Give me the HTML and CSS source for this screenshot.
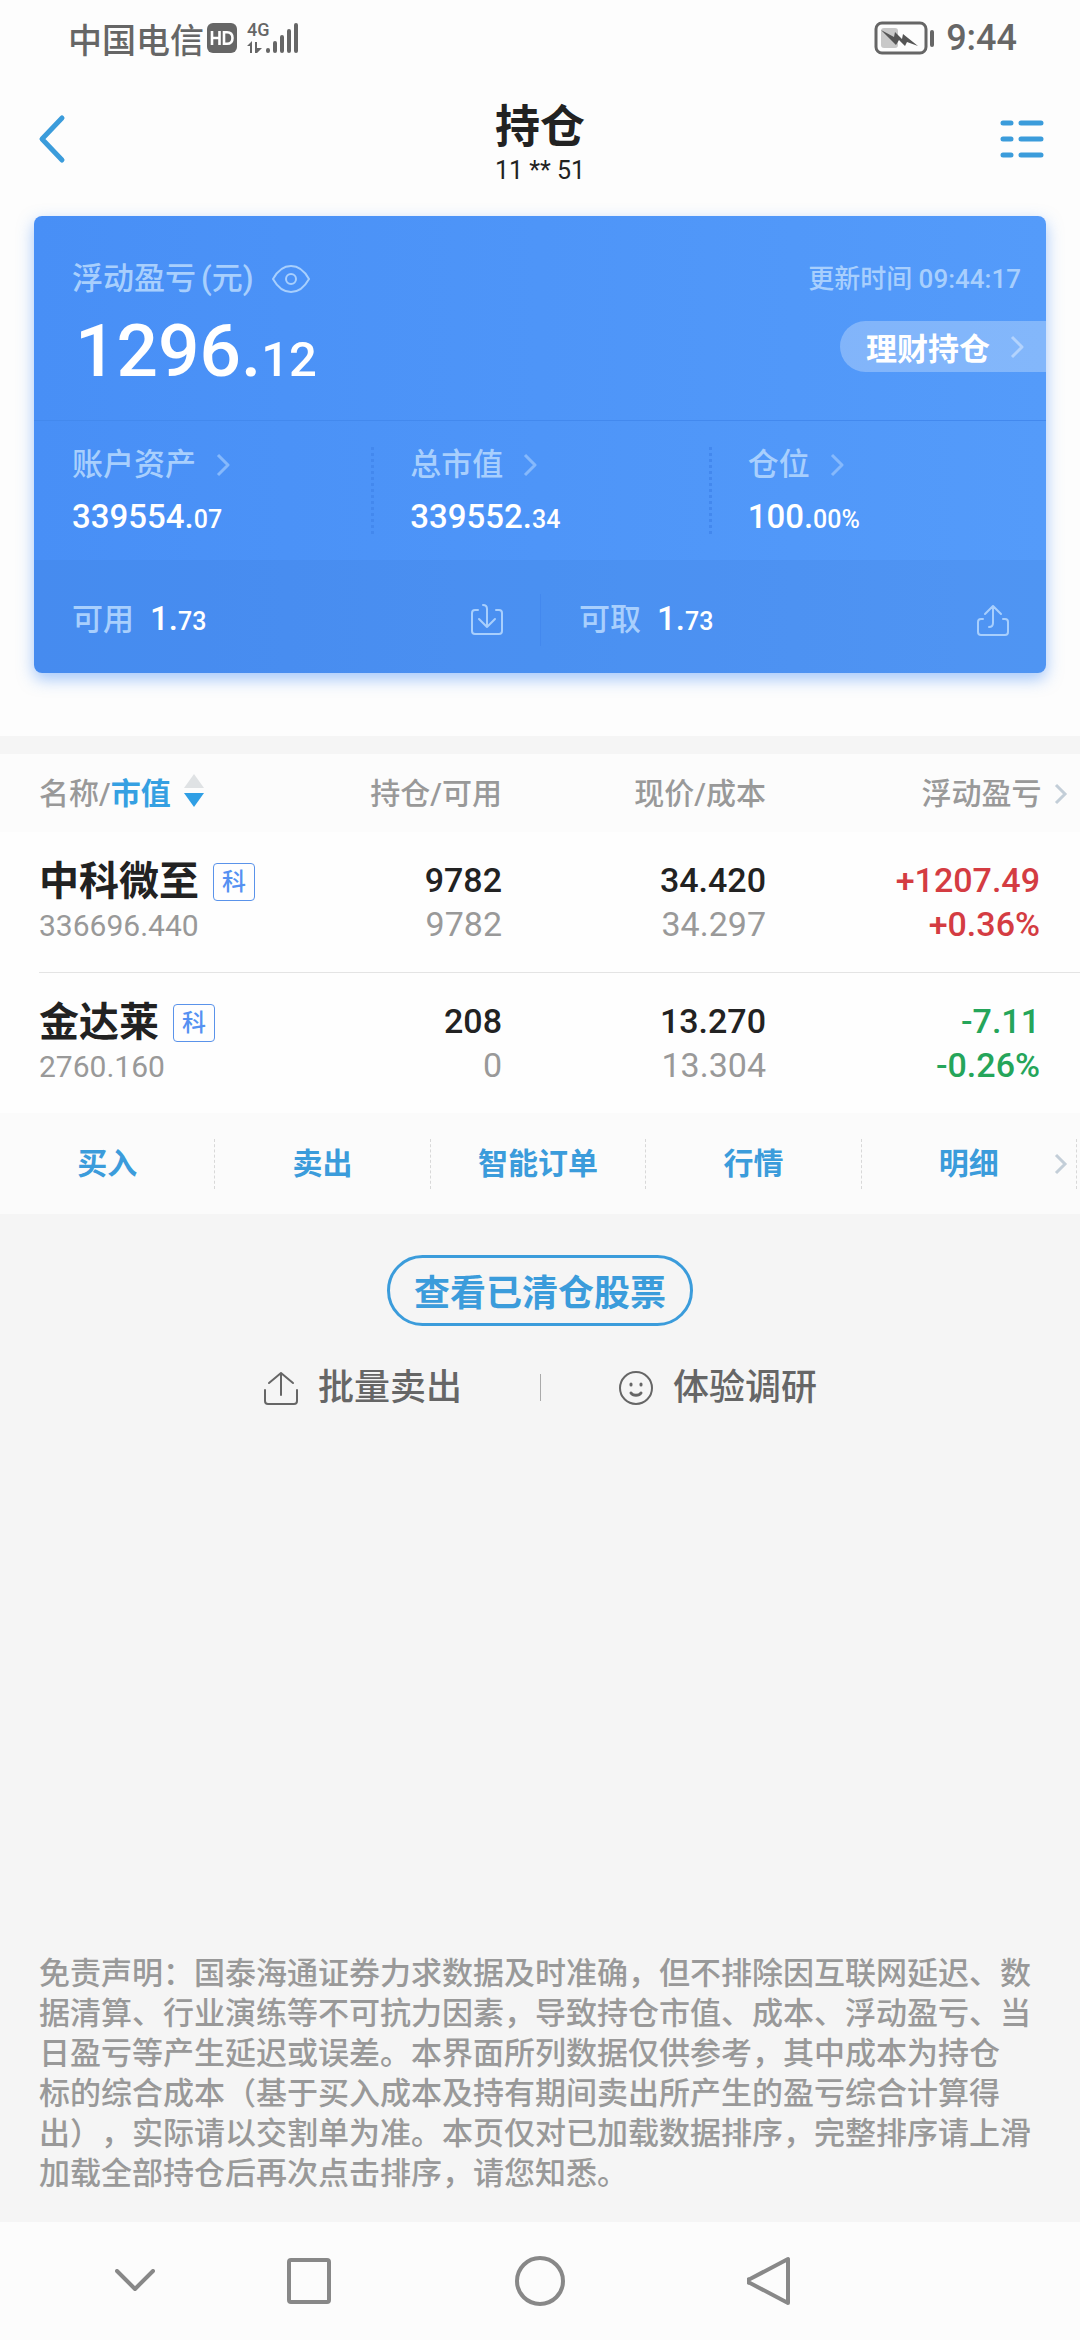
FILE: index.html
```html
<!DOCTYPE html>
<html lang="zh-CN">
<head>
  <meta charset="UTF-8">
  <title>持仓</title>
  <meta name="viewport" content="width=device-width, initial-scale=1.0">
  <link rel="stylesheet" href="styles.css">
</head>
<body>
  <div class="status-bar">
    <div class="status-left">
      <span>中国电信</span>
      <svg class="hd" width="30" height="30" viewBox="0 0 30 30">
        <rect width="30" height="30" rx="6" fill="#666"/>
        <path d="M5 8v14M12.500 8v14M5 15h7.500M17 9.200h3c3.500 0 5.500 2 5.500 5.800s-2 5.800-5.500 5.800h-3z" fill="none" stroke="#fff" stroke-width="2.600"/>
      </svg>
      <div class="network">
        <span>4G</span>
        <svg width="16" height="13" viewBox="0 0 16 13"><path d="M0 5l5-5v12H3V5zM8 1h2v6h5l-5 5H8z" fill="#666"/></svg>
      </div>
      <svg width="34" height="32" viewBox="0 0 34 32">
        <path d="M3 28v1M10 21v8M17 15v14M24 9v20M31 3v26" stroke="#666" stroke-width="4" stroke-linecap="round"/>
      </svg>
    </div>
    <div class="status-right">
      <svg width="62" height="34" viewBox="0 0 62 34">
        <rect x="2" y="2" width="50" height="30" rx="6" fill="none" stroke="#666" stroke-width="3"/>
        <rect x="7" y="7" width="17" height="20" rx="3" fill="#c8c8c8"/>
        <path d="M7 9l13 7 1-5 7 7 1-5 15 12-11-4-2 4-6-6-3 5z" fill="#555"/>
        <path d="M58 11v13" stroke="#666" stroke-width="4" stroke-linecap="round"/>
      </svg>
      <span>9:44</span>
    </div>
  </div>

  <header class="header">
    <button class="icon-btn" aria-label="返回">
      <svg width="30" height="50" viewBox="0 0 30 50"><path d="M26 4L6 25l20 21" fill="none" stroke="#3b9cdb" stroke-width="5" stroke-linecap="round" stroke-linejoin="round"/></svg>
    </button>
    <div class="header-title">
      <h1>持仓</h1>
      <p>11 ** 51</p>
    </div>
    <button class="icon-btn menu" aria-label="菜单">
      <svg width="44" height="40" viewBox="0 0 44 40"><path d="M3 4h8M21 4h20M3 20h8M21 20h20M3 36h8M21 36h20" stroke="#3b9cdb" stroke-width="5" stroke-linecap="round"/></svg>
    </button>
  </header>

  <div class="account">
    <section class="card">
      <div class="card-top">
        <div class="profit">
          <div class="label">浮动盈亏<span class="unit">(元)</span>
            <button class="icon-btn eye" aria-label="隐藏金额">
              <svg width="38" height="28" viewBox="0 0 38 28" fill="none" stroke="#a8cffd" stroke-width="2"><path d="M1 14C6 5 12 1 19 1s13 4 18 13c-5 9-11 13-18 13S6 23 1 14z"/><circle cx="19" cy="14" r="5"/></svg>
            </button>
          </div>
          <div class="amount">1296.<small>12</small></div>
        </div>
        <div class="card-side">
          <div class="time">更新时间 09:44:17</div>
          <a class="pill" href="#">理财持仓
            <svg width="14" height="24" viewBox="0 0 14 24"><path d="M2 2l10 10L2 22"/></svg>
          </a>
        </div>
      </div>
      <div class="stats">
        <a class="stat" href="#">
          <span class="label">账户资产 <svg width="14" height="24" viewBox="0 0 14 24"><path d="M2 2l10 10L2 22"/></svg></span>
          <span class="value">339554.<small>07</small></span>
        </a>
        <a class="stat" href="#">
          <span class="label">总市值 <svg width="14" height="24" viewBox="0 0 14 24"><path d="M2 2l10 10L2 22"/></svg></span>
          <span class="value">339552.<small>34</small></span>
        </a>
        <a class="stat" href="#">
          <span class="label">仓位 <svg width="14" height="24" viewBox="0 0 14 24"><path d="M2 2l10 10L2 22"/></svg></span>
          <span class="value">100.<small>00%</small></span>
        </a>
      </div>
      <div class="cash">
        <div class="cash-item">
          <span class="label">可用</span>
          <span class="value">1.<small>73</small></span>
          <button class="icon-btn" aria-label="转入">
            <svg width="32" height="32" viewBox="0 0 32 32" fill="none" stroke="#a8cffd" stroke-width="2" stroke-linecap="round" stroke-linejoin="round"><path d="M7 6H4a3 3 0 0 0-3 3v18a3 3 0 0 0 3 3h24a3 3 0 0 0 3-3V9a3 3 0 0 0-3-3h-3M12 1c3 0 4 1 4 4v18M8 15l8 8 8-8"/></svg>
          </button>
        </div>
        <div class="cash-item">
          <span class="label">可取</span>
          <span class="value">1.<small>73</small></span>
          <button class="icon-btn" aria-label="转出">
            <svg width="32" height="32" viewBox="0 0 32 32" fill="none" stroke="#a8cffd" stroke-width="2" stroke-linecap="round" stroke-linejoin="round"><path d="M6 15H4a3 3 0 0 0-3 3v10a3 3 0 0 0 3 3h24a3 3 0 0 0 3-3V18a3 3 0 0 0-3-3h-2M12 23c3 0 4-1 4-4V2M8 10l8-8 8 8"/></svg>
          </button>
        </div>
      </div>
    </section>
  </div>

  <main class="holdings">
    <table>
      <colgroup><col><col class="col-qty"><col class="col-price"><col class="col-profit"></colgroup>
      <thead>
        <tr>
          <th>
            <button class="sort">名称/<b>市值</b>
              <svg width="20" height="34" viewBox="0 0 20 34"><path d="M10 0l10 14H0z" fill="#dfe2e4"/><path d="M0 19h20L10 33z" fill="#2f9fe5"/></svg>
            </button>
          </th>
          <th>持仓/可用</th>
          <th>现价/成本</th>
          <th class="more">浮动盈亏
            <svg class="arrow" width="14" height="22" viewBox="0 0 14 22"><path d="M2 2l9 9-9 9"/></svg>
          </th>
        </tr>
      </thead>
      <tbody>
        <tr>
          <td><div class="stock"><div class="name">中科微至<span class="tag">科</span></div><div class="worth">336696.440</div></div></td>
          <td>9782<span class="sub">9782</span></td>
          <td>34.420<span class="sub">34.297</span></td>
          <td class="up">+1207.49<br>+0.36%</td>
        </tr>
        <tr>
          <td><div class="stock"><div class="name">金达莱<span class="tag">科</span></div><div class="worth">2760.160</div></div></td>
          <td>208<span class="sub">0</span></td>
          <td>13.270<span class="sub">13.304</span></td>
          <td class="down">-7.11<br>-0.26%</td>
        </tr>
      </tbody>
    </table>
    <nav class="actions">
      <a href="#">买入</a>
      <a href="#">卖出</a>
      <a href="#">智能订单</a>
      <a href="#">行情</a>
      <a href="#">明细<svg class="arrow" width="14" height="22" viewBox="0 0 14 22"><path d="M2 2l9 9-9 9"/></svg></a>
    </nav>
  </main>

  <button class="cleared">查看已清仓股票</button>

  <div class="tools">
    <button>
      <svg width="34" height="34" viewBox="0 0 34 34" fill="none" stroke="#666" stroke-width="2" stroke-linecap="round" stroke-linejoin="round"><path d="M1 19v11a3 3 0 0 0 3 3h26a3 3 0 0 0 3-3V19M17 24V2M5 12L17 2l12 10"/></svg>
      批量卖出
    </button>
    <button>
      <svg width="34" height="34" viewBox="0 0 34 34" fill="none" stroke="#666" stroke-width="2" stroke-linecap="round"><circle cx="17" cy="17" r="16"/><path d="M12 13v1M22 13v1M12 22c2 3 8 3 10 0" stroke-width="3"/></svg>
      体验调研
    </button>
  </div>

  <p class="disclaimer">
    免责声明：国泰海通证券力求数据及时准确，但不排除因互联网延迟、数<br>
    据清算、行业演练等不可抗力因素，导致持仓市值、成本、浮动盈亏、当<br>
    日盈亏等产生延迟或误差。本界面所列数据仅供参考，其中成本为持仓<br>
    标的综合成本（基于买入成本及持有期间卖出所产生的盈亏综合计算得<br>
    出），实际请以交割单为准。本页仅对已加载数据排序，完整排序请上滑<br>
    加载全部持仓后再次点击排序，请您知悉。
  </p>

  <nav class="nav-bar">
    <button aria-label="收起"><svg width="40" height="24" viewBox="0 0 40 24"><path d="M2 2l18 18L38 2"/></svg></button>
    <button aria-label="最近任务"><svg width="44" height="46" viewBox="0 0 44 46"><rect x="2" y="2" width="40" height="42" rx="2"/></svg></button>
    <button aria-label="主页"><svg width="50" height="50" viewBox="0 0 50 50"><circle cx="25" cy="25" r="23"/></svg></button>
    <button aria-label="后退"><svg width="44" height="50" viewBox="0 0 44 50"><path d="M41 3v44L3 27a2 2 0 0 1 0-4z"/></svg></button>
  </nav>
</body>
</html>
```
FILE: styles.css
```css
* { box-sizing: border-box; }
body { margin: 0; min-height: 100vh; display: flex; flex-direction: column; background: #f5f5f5; color: #222; font-family: Roboto, "Noto Sans CJK SC", sans-serif; font-weight: 500; }
h1, p { margin: 0; }
a { color: inherit; text-decoration: none; }
button { padding: 0; border: none; background: none; color: inherit; font: inherit; }
svg { flex: none; }
.icon-btn { display: flex; }

/* 状态栏 */
.status-bar { display: flex; justify-content: space-between; align-items: center; height: 76px; padding: 0 63px 0 68px; background: #fdfdfd; color: #666; }
.status-left, .status-right { display: flex; align-items: center; }
.status-left { font-size: 34px; }
.hd { margin: 0 10px 0 3px; }
.network { display: flex; flex-direction: column; gap: 4px; width: 18px; font-size: 18px; line-height: 15px; }
.status-right { gap: 10px; font-size: 36px; }

/* 标题栏 */
.header { display: grid; grid-template-columns: 1fr auto 1fr; align-items: center; height: 140px; padding: 0 36px 14px; background: #fdfdfd; }
.header-title { padding-top: 8px; text-align: center; }
.header h1 { font-size: 45px; line-height: 56px; font-weight: 700; }
.header p { font-size: 25px; line-height: 30px; font-weight: 400; }
.menu { justify-self: end; }

/* 资产卡片 */
.account { padding: 0 34px 63px; border-bottom: 18px solid #f5f5f5; background: #fdfdfd; }
.card { border-radius: 8px; background: linear-gradient(90deg, #488ff6, #549bfa); color: #fff; box-shadow: 0 6px 16px rgba(72, 143, 247, 0.5); }
.label { display: flex; align-items: center; color: #a8cffd; font-size: 31px; line-height: 40px; }
.label > svg, .pill svg { margin-left: 20px; fill: none; stroke: #86b9fc; stroke-width: 3; stroke-linejoin: round; }
small { font-size: 25px; }
.card-top { display: flex; justify-content: space-between; height: 205px; padding: 43px 0 0 38px; border-bottom: 1px solid #4389ee; }
.unit { margin-left: 5px; }
.eye { margin-left: 18px; }
.amount { margin-top: 8px; padding-left: 3px; font-size: 73px; line-height: 88px; }
.amount small { font-size: 49px; }
.card-side { display: flex; flex-direction: column; align-items: flex-end; gap: 22px; }
.time { padding-right: 25px; color: #a8cffd; font-size: 26px; line-height: 40px; }
.pill { display: flex; align-items: center; height: 51px; padding: 0 22px 0 26px; border-radius: 26px 0 0 26px; background: rgba(255, 255, 255, 0.28); font-size: 31px; font-weight: 700; }
.pill svg { stroke: #b3d3fd; }
.stats { display: grid; grid-template-columns: repeat(3, 1fr); padding: 26px 0; }
.stat { display: flex; flex-direction: column; gap: 12px; height: 87px; padding-left: 38px; }
.stat .label { margin-top: -2px; }
.stat + .stat { padding-left: 36px; border-left: 3px dotted #4388ee; }
.value { font-size: 33px; line-height: 40px; }
.cash { display: grid; grid-template-columns: 1fr 1fr; height: 113px; padding-top: 34px; border-radius: 0 0 8px 8px; background: rgba(60, 120, 210, 0.18); }
.cash-item { display: flex; align-items: center; gap: 16px; height: 52px; padding: 0 37px 0 38px; }
.cash-item + .cash-item { border-left: 1px solid #4388ee; }
.cash-item .icon-btn { margin-left: auto; }

/* 持仓列表 */
.holdings { background: #fefefe; }
table { width: 100%; table-layout: fixed; border-collapse: separate; border-spacing: 0; }
.col-qty { width: 220px; }
.col-price { width: 264px; }
.col-profit { width: 314px; }
thead { background: #fcfcfc; }
th { height: 78px; padding: 0 0 4px; color: #999; font-size: 30px; font-weight: 500; text-align: right; white-space: nowrap; }
th:first-child { padding-left: 39px; text-align: left; }
.sort { display: flex; align-items: center; }
.sort b { color: #35a0e2; }
.sort svg { margin-left: 13px; }
.arrow { fill: none; stroke: #c3ced8; stroke-width: 3; }
.more .arrow { margin: 0 12px 0 5px; vertical-align: -1px; }
td { padding: 26px 0; font-size: 34px; line-height: 44px; text-align: right; }
td:last-child { padding-right: 40px; }
td:first-child { padding: 0 0 0 39px; text-align: left; }
.stock { padding: 28px 0 24px; }
tr:not(:last-child) > td:not(:first-child), tr:not(:last-child) .stock { border-bottom: 1px solid #e4e4e4; }
.sub { display: block; color: #999; font-weight: 400; }
.name { display: flex; align-items: center; height: 44px; font-size: 40px; font-weight: 700; }
.tag { margin-left: 14px; width: 42px; border: 1px solid #5a93ea; border-radius: 4px; color: #5591f2; font-size: 24px; line-height: 36px; font-weight: 500; text-align: center; }
.worth { color: #999; font-size: 30px; font-weight: 400; }
.up { color: #d43c42; }
.down { color: #25a55a; }

.actions { display: grid; grid-template-columns: repeat(5, 1fr); padding: 26px 3px 25px 0; background: #fbfbfb; color: #3b9cdb; font-size: 30px; font-weight: 700; }
.actions a { position: relative; height: 50px; line-height: 50px; border-right: 1px dashed #d8d8d8; text-align: center; }
.actions .arrow { position: absolute; right: 8px; top: 14px; }

.cleared { align-self: center; margin-top: 41px; padding: 0 24px 2px; height: 71px; border: 3px solid #3b9cdb; border-radius: 36px; color: #3b9cdb; font-size: 36px; font-weight: 700; }
.tools { display: grid; grid-template-columns: 1fr 1fr; margin-top: 48px; color: #666; font-size: 36px; line-height: 32px; }
.tools button { display: flex; align-items: center; justify-content: flex-end; gap: 20px; height: 27px; padding-right: 78px; white-space: nowrap; }
.tools button + button { justify-content: flex-start; padding: 0 0 0 78px; border-left: 1px solid #aaa; }

.disclaimer { margin-top: auto; padding: 0 30px 28px 39px; color: #999; font-size: 31px; line-height: 40px; white-space: nowrap; text-spacing-trim: space-all; }

/* 系统导航键 */
.nav-bar { display: grid; grid-template-columns: 172fr 228fr 232fr 333fr; align-items: center; height: 118px; padding-left: 115px; background: #fcfcfc; }
.nav-bar button { display: flex; justify-self: start; }
.nav-bar svg { fill: none; stroke: #888; stroke-width: 4; stroke-linejoin: round; stroke-linecap: round; }
```
